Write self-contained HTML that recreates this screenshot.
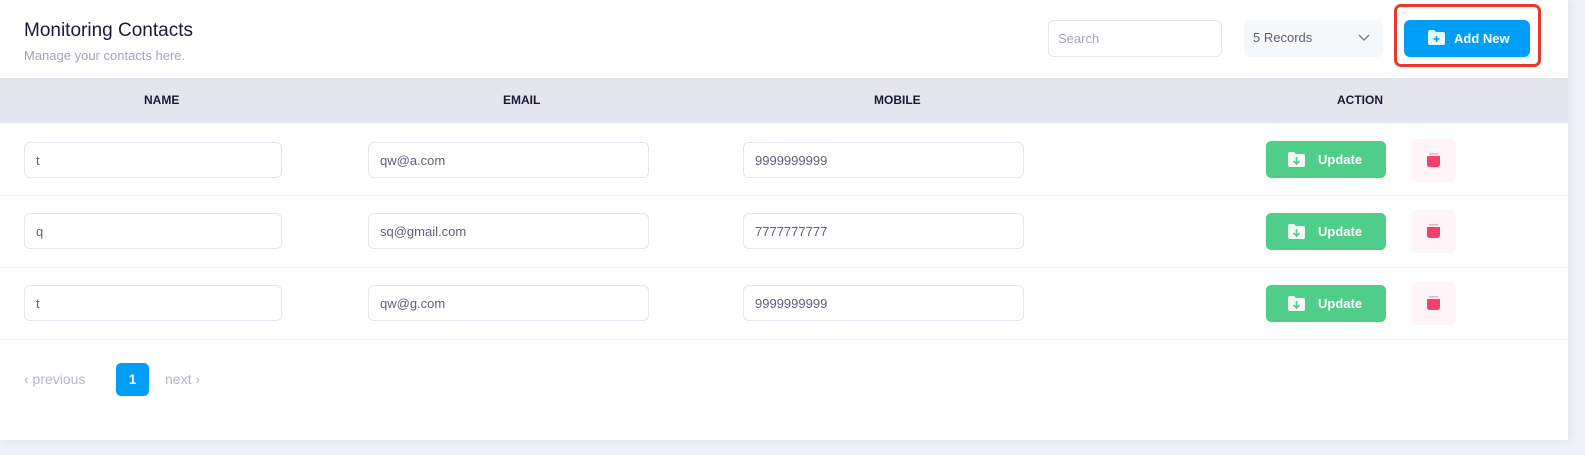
<!DOCTYPE html>
<html><head><style>
*{box-sizing:border-box;margin:0;padding:0}
body{width:1585px;height:455px;background:#eef1f7;font-family:"Liberation Sans",sans-serif;position:relative;overflow:hidden}
.card{position:absolute;left:0;top:0;width:1568px;height:440px;background:#fff;box-shadow:2px 0 8px rgba(0,0,0,.06)}
.abs{position:absolute}
h1{position:absolute;left:24px;top:20px;font-size:19px;font-weight:normal;color:#181c32}
.sub{left:24px;top:48px;font-size:13px;color:#a1a5b7}
.search{left:1048px;top:20px;width:174px;height:37px;border:1px solid #e4e6ef;border-radius:6px;font-size:13px;color:#a1a5b7;padding:10px 9px}
.sel{left:1244px;top:20px;width:139px;height:37px;background:#f5f8fa;border-radius:6px;font-size:13px;color:#5e6278;padding:10px 9px}
.add{left:1404px;top:20px;width:126px;height:37px;background:#009ef7;border-radius:6px;color:#fff;font-size:13px;font-weight:bold;padding:11px 0 0 50px}
.red{left:1394px;top:4px;width:147px;height:63px;border:3px solid #e8372b;border-radius:7px}
.thead{left:0;top:78px;width:1568px;height:45px;background:#e4e6ef}
.th{top:93px;font-size:12px;font-weight:bold;color:#181c32}
.inp{height:36px;border:1px solid #e4e6ef;border-radius:6px;font-size:13px;color:#5e6278;padding:10px 11px}
.upd{width:120px;height:37px;background:#50cd89;border-radius:5px;color:#fff;font-size:13px;font-weight:bold;padding:11px 0 0 52px}
.del{width:45px;height:43px;background:#fff5f8;border-radius:6px}
.line{left:0;width:1568px;height:1px;background:#eff2f5}
</style></head><body>
<div class="card">
<h1>Monitoring Contacts</h1>
<div class="abs sub">Manage your contacts here.</div>
<div class="abs search">Search</div>
<div class="abs sel">5 Records<svg class="abs" style="left:114px;top:14px" width="12" height="8"><path d="M1 1l5 5 5-5" stroke="#7e8299" stroke-width="1.5" fill="none"/></svg></div>
<div class="abs add"><svg class="abs" style="left:24px;top:10px" width="17" height="15"><path d="M0 2q0-2 2-2h4l2 2h7q2 0 2 2v9q0 2-2 2H2q-2 0-2-2z" fill="#fff" opacity=".9"/><path d="M8.5 6v6M5.5 9h6" stroke="#009ef7" stroke-width="1.6"/></svg>Add New</div>
<div class="abs red"></div>
<div class="abs thead"></div>
<div class="abs th" style="left:144px">NAME</div>
<div class="abs th" style="left:503px">EMAIL</div>
<div class="abs th" style="left:874px">MOBILE</div>
<div class="abs th" style="left:1337px">ACTION</div>

<div class="abs inp" style="left:24px;top:142px;width:258px">t</div>
<div class="abs inp" style="left:368px;top:142px;width:281px">qw@a.com</div>
<div class="abs inp" style="left:743px;top:142px;width:281px">9999999999</div>
<div class="abs upd" style="left:1266px;top:141px"><svg class="abs" style="left:22px;top:11px" width="17" height="15"><path d="M0 2q0-2 2-2h4l2 2h7q2 0 2 2v9q0 2-2 2H2q-2 0-2-2z" fill="#fff" opacity=".9"/><path d="M8.5 5v7M5.5 9l3 3 3-3" stroke="#50cd89" stroke-width="1.6" fill="none"/></svg>Update</div>
<div class="abs del" style="left:1411px;top:139px"><svg class="abs" style="left:15px;top:13px" width="15" height="16"><rect x="3" y="1" width="9" height="1.5" fill="#f1416c" opacity=".4"/><path d="M1 4h13v8q0 3-3 3H4q-3 0-3-3z" fill="#f1416c"/></svg></div>
<div class="abs line" style="top:195px"></div>

<div class="abs inp" style="left:24px;top:213px;width:258px">q</div>
<div class="abs inp" style="left:368px;top:213px;width:281px">sq@gmail.com</div>
<div class="abs inp" style="left:743px;top:213px;width:281px">7777777777</div>
<div class="abs upd" style="left:1266px;top:213px"><svg class="abs" style="left:22px;top:11px" width="17" height="15"><path d="M0 2q0-2 2-2h4l2 2h7q2 0 2 2v9q0 2-2 2H2q-2 0-2-2z" fill="#fff" opacity=".9"/><path d="M8.5 5v7M5.5 9l3 3 3-3" stroke="#50cd89" stroke-width="1.6" fill="none"/></svg>Update</div>
<div class="abs del" style="left:1411px;top:210px"><svg class="abs" style="left:15px;top:13px" width="15" height="16"><rect x="3" y="1" width="9" height="1.5" fill="#f1416c" opacity=".4"/><path d="M1 4h13v8q0 3-3 3H4q-3 0-3-3z" fill="#f1416c"/></svg></div>
<div class="abs line" style="top:267px"></div>

<div class="abs inp" style="left:24px;top:285px;width:258px">t</div>
<div class="abs inp" style="left:368px;top:285px;width:281px">qw@g.com</div>
<div class="abs inp" style="left:743px;top:285px;width:281px">9999999999</div>
<div class="abs upd" style="left:1266px;top:285px"><svg class="abs" style="left:22px;top:11px" width="17" height="15"><path d="M0 2q0-2 2-2h4l2 2h7q2 0 2 2v9q0 2-2 2H2q-2 0-2-2z" fill="#fff" opacity=".9"/><path d="M8.5 5v7M5.5 9l3 3 3-3" stroke="#50cd89" stroke-width="1.6" fill="none"/></svg>Update</div>
<div class="abs del" style="left:1411px;top:282px"><svg class="abs" style="left:15px;top:13px" width="15" height="16"><rect x="3" y="1" width="9" height="1.5" fill="#f1416c" opacity=".4"/><path d="M1 4h13v8q0 3-3 3H4q-3 0-3-3z" fill="#f1416c"/></svg></div>
<div class="abs line" style="top:339px"></div>

<div class="abs" style="left:24px;top:371px;font-size:14px;color:#b5b5c3">‹ previous</div>
<div class="abs" style="left:116px;top:363px;width:33px;height:33px;background:#009ef7;border-radius:5px;color:#fff;font-size:14px;font-weight:bold;text-align:center;line-height:33px">1</div>
<div class="abs" style="left:165px;top:371px;font-size:14px;color:#b5b5c3">next ›</div>
</div>
</body></html>
